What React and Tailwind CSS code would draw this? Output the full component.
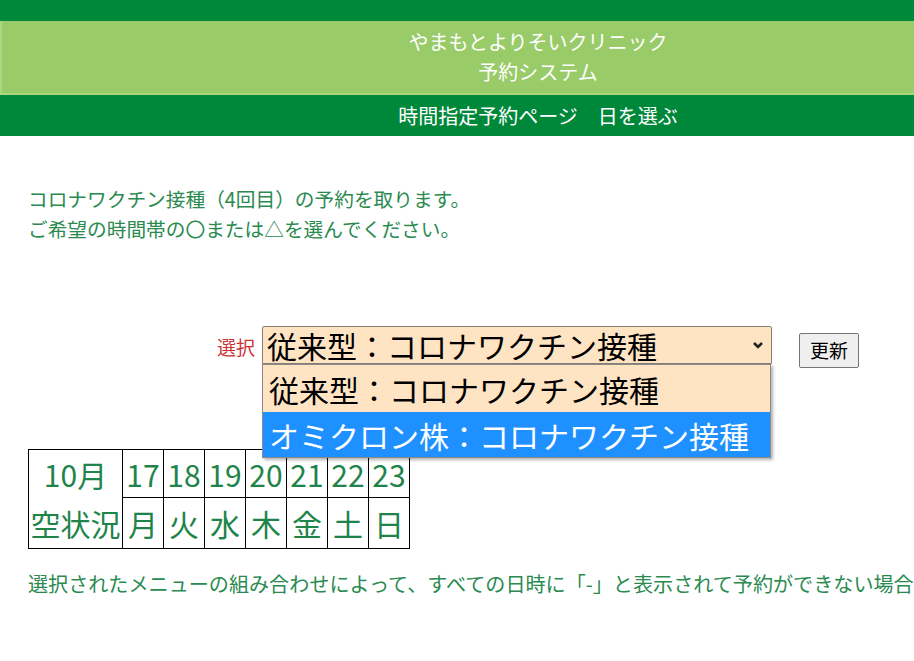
import React from "react";

const days = [
  ["17", "月"],
  ["18", "火"],
  ["19", "水"],
  ["20", "木"],
  ["21", "金"],
  ["22", "土"],
  ["23", "日"],
];

const ReservePage = () => {
  return (
    <div className="w-[914px] h-[661px] overflow-hidden bg-white font-['Noto_Sans_CJK_JP','Liberation_Sans',sans-serif]">
      <div className="w-[1076px]">
        {/* header */}
        <div className="h-[21px] bg-[#00883a]" />
        <div className="bg-[#99cb69] border-x-2 border-b-2 border-[#a9d67e] py-[6px] text-center text-white text-[20px] leading-[30px] h-[74px]">
          <div>やまもとよりそいクリニック</div>
          <div>予約システム</div>
        </div>
        <div className="bg-[#00883a] h-[41px] flex items-center justify-center text-white text-[20px]">
          時間指定予約ページ　日を選ぶ
        </div>

        <div className="pl-[28px] mt-[48px] text-[#2a8a50] text-[19.7px] leading-[30px]">
          <p>コロナワクチン接種（4回目）の予約を取ります。</p>
          <p>ご希望の時間帯の〇または△を選んでください。</p>
        </div>

        {/* menu select */}
        <div className="mt-[78px] flex items-center justify-center">
          <span className="text-[#cc3333] text-[19px] mr-[7px] mt-[4px]">選択</span>
          <div className="relative">
            <div className="w-[510px] h-[38px] bg-[#ffe4c4] border border-[#8a7f74] rounded-t-[2px] flex items-center pl-[4px] pr-[6px] text-black text-[30px] leading-none">
              <span className="flex-1">従来型：コロナワクチン接種</span>
              <svg width="14" height="14" viewBox="0 0 14 14">
                <path d="M3 5 L7 9 L11 5" fill="none" stroke="#222" strokeWidth="2.6" />
              </svg>
            </div>
            <div className="absolute left-0 top-[38px] w-[509px] border border-[#8a8a8a] shadow-[2px_2px_3px_rgba(0,0,0,0.3)] z-10 text-[30px] leading-none">
              <div className="h-[47px] bg-[#ffe4c4] text-black flex items-center pl-[6px]">
                従来型：コロナワクチン接種
              </div>
              <div className="h-[45px] bg-[#1e90ff] text-white flex items-center pl-[6px]">
                オミクロン株：コロナワクチン接種
              </div>
            </div>
          </div>
          <button className="ml-[27px] mt-[11px] w-[60px] h-[35px] bg-[#efefef] border border-[#767676] rounded-[2px] text-black text-[19px]">
            更新
          </button>
        </div>

        {/* calendar */}
        <div className="pl-[28px] mt-[81px]">
          <table className="border-collapse border border-black text-[#1e8449] text-[30px] leading-none">
            <tbody>
              <tr className="h-[48px]">
                <td rowSpan={2} className="w-[94px] border border-black text-center p-0">
                  <div className="h-[47px] flex items-center justify-center">10月</div>
                  <div className="h-[51px] flex items-center justify-center">空状況</div>
                </td>
                {days.map(([d]) => (
                  <td key={d} className="w-[41px] border border-black text-center p-0">
                    {d}
                  </td>
                ))}
              </tr>
              <tr className="h-[51px]">
                {days.map(([d, w]) => (
                  <td key={d} className="border border-black text-center p-0">
                    {w}
                  </td>
                ))}
              </tr>
            </tbody>
          </table>
        </div>

        <p className="pl-[28px] mt-[20px] whitespace-nowrap text-[#2a8a50] text-[20.1px] leading-[30px]">
          選択されたメニューの組み合わせによって、すべての日時に「-」と表示されて予約ができない場合
        </p>
      </div>
    </div>
  );
};

export default ReservePage;
